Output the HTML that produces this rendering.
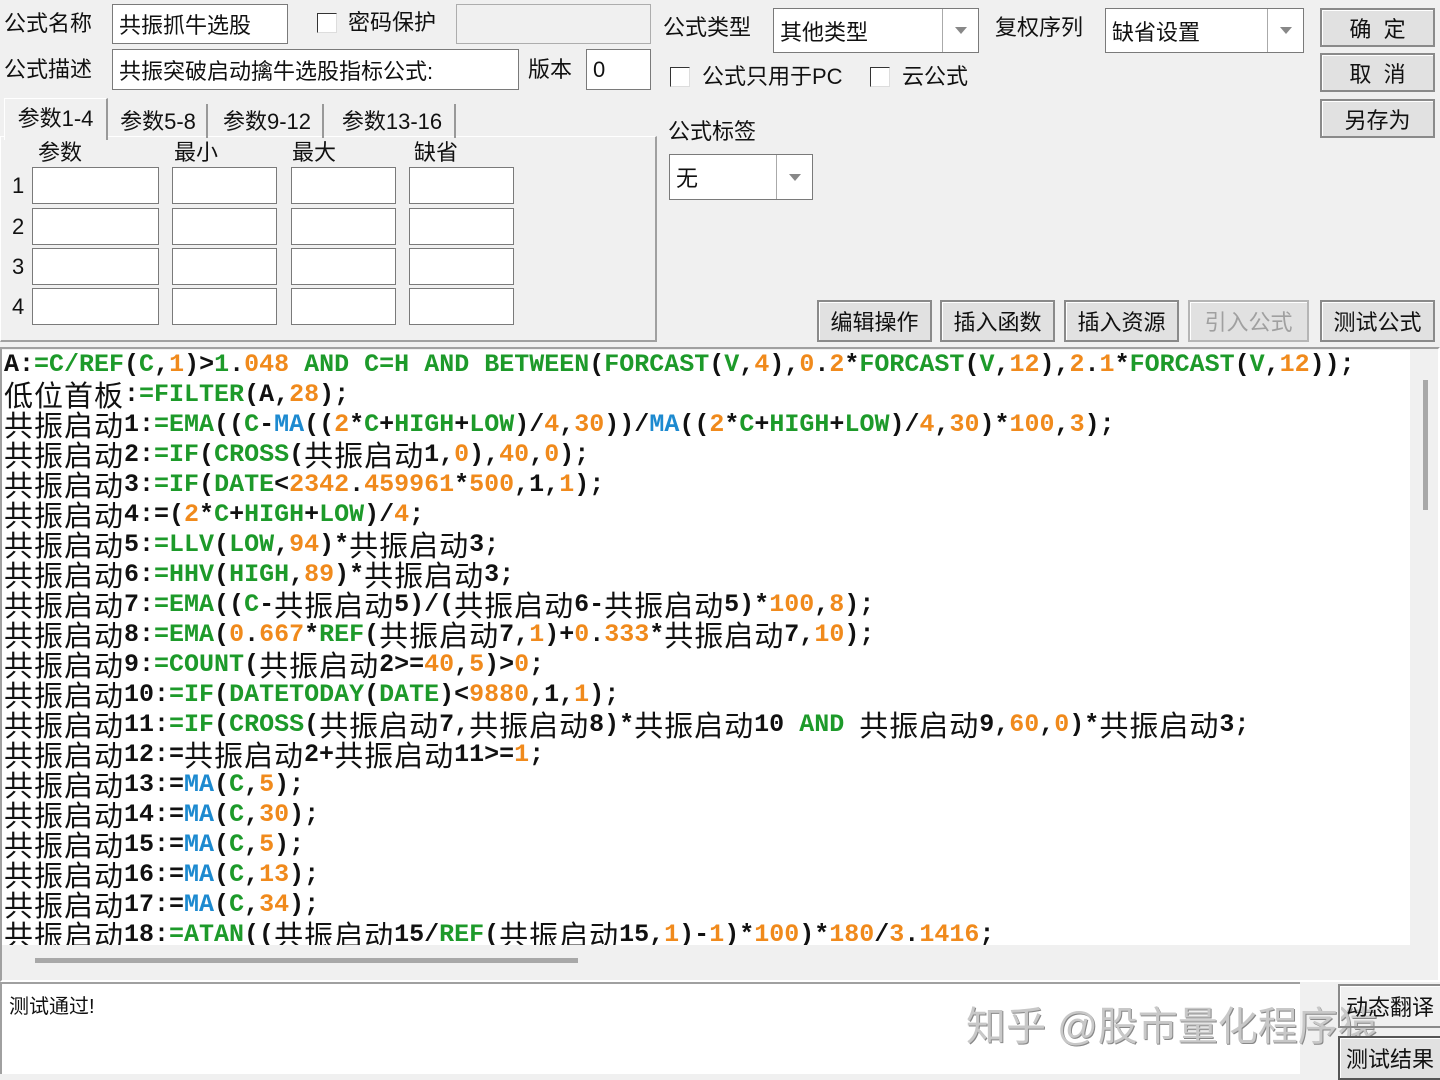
<!DOCTYPE html>
<html><head><meta charset="utf-8"><style>
*{box-sizing:border-box;margin:0;padding:0}
body{width:1440px;height:1074px;background:#f0f0f0;position:relative;overflow:hidden;font-family:"Liberation Sans","Noto Sans CJK SC",sans-serif;font-size:22px;color:#111}
.a{position:absolute}
.lbl{position:absolute;line-height:30px;white-space:nowrap}
.in{position:absolute;background:#fff;border:1px solid #7a7a7a;padding-left:6px;white-space:nowrap;display:flex;align-items:center}
.dis{background:#f0f0f0;border-color:#adadad}
.cb{position:absolute;width:20px;height:20px;background:#fff;border:1px solid #333;border-right-color:#ddd;border-bottom-color:#ddd}
.btn{position:absolute;background:#e1e1e1;border:2px solid #8a8a8a;display:flex;align-items:center;justify-content:center;white-space:nowrap;box-shadow:inset 1px 1px 0 #fff}
.sel .arr{position:absolute;right:0;top:0;bottom:0;width:36px;border-left:1px solid #aaa;display:flex;align-items:center;justify-content:center}
.tri{width:0;height:0;border-left:6px solid transparent;border-right:6px solid transparent;border-top:7px solid #888}
.box{position:absolute;background:#fff;border:1px solid #7a7a7a}
#code{position:absolute;left:2px;top:350px;width:1408px;height:595px;background:#fff;overflow:hidden}
#code div{height:30px;line-height:30px;white-space:pre;font-family:"Liberation Mono",monospace;font-size:25px;font-weight:bold;color:#111;padding-left:2px}
.c{font-family:"Noto Sans CJK SC",sans-serif;font-weight:normal;font-size:29px;letter-spacing:1px;display:inline-block;height:30px;line-height:28px;vertical-align:top;overflow:visible}
.g{color:#1d9a2a}.o{color:#f08a1c}.b{color:#1d8ad0}
</style></head><body>
<div class="lbl" style="left:4px;top:9px">公式名称</div>
<div class="in" style="left:112px;top:4px;width:176px;height:40px">共振抓牛选股</div>
<div class="cb" style="left:317px;top:13px"></div>
<div class="lbl" style="left:348px;top:8px">密码保护</div>
<div class="in dis" style="left:456px;top:4px;width:195px;height:40px"></div>
<div class="lbl" style="left:4px;top:55px">公式描述</div>
<div class="in" style="left:112px;top:49px;width:407px;height:41px">共振突破启动擒牛选股指标公式:</div>
<div class="lbl" style="left:528px;top:55px">版本</div>
<div class="in" style="left:586px;top:49px;width:65px;height:41px">0</div>

<div class="lbl" style="left:663px;top:13px">公式类型</div>
<div class="in sel" style="left:773px;top:8px;width:206px;height:45px">其他类型<div class="arr"><div class="tri"></div></div></div>
<div class="lbl" style="left:995px;top:13px">复权序列</div>
<div class="in sel" style="left:1105px;top:8px;width:199px;height:45px">缺省设置<div class="arr"><div class="tri"></div></div></div>
<div class="cb" style="left:670px;top:67px"></div>
<div class="lbl" style="left:702px;top:62px">公式只用于PC</div>
<div class="cb" style="left:870px;top:67px"></div>
<div class="lbl" style="left:902px;top:62px">云公式</div>
<div class="lbl" style="left:668px;top:117px">公式标签</div>
<div class="in sel" style="left:669px;top:154px;width:144px;height:46px">无<div class="arr"><div class="tri"></div></div></div>

<div class="btn" style="left:1320px;top:8px;width:115px;height:39px">确&nbsp;&nbsp;定</div>
<div class="btn" style="left:1320px;top:53px;width:115px;height:39px">取&nbsp;&nbsp;消</div>
<div class="btn" style="left:1320px;top:99px;width:115px;height:39px">另存为</div>

<div class="a" style="left:0;top:136px;width:657px;height:206px;border:1px solid #fff;border-right:2px solid #a0a0a0;border-bottom:2px solid #a0a0a0"></div>
<div class="a" style="left:4px;top:98px;width:104px;height:42px;background:#f0f0f0;border:1px solid #fff;border-bottom:none;border-right:2px solid #999;text-align:center;line-height:40px">参数1-4</div>
<div class="a" style="left:110px;top:104px;width:98px;height:34px;border-right:2px solid #999;text-align:center;line-height:36px">参数5-8</div>
<div class="a" style="left:212px;top:104px;width:112px;height:34px;border-right:2px solid #999;text-align:center;line-height:36px">参数9-12</div>
<div class="a" style="left:330px;top:104px;width:126px;height:34px;border-right:2px solid #999;text-align:center;line-height:36px">参数13-16</div>
<div class="lbl" style="left:38px;top:138px">参数</div>
<div class="lbl" style="left:174px;top:138px">最小</div>
<div class="lbl" style="left:292px;top:138px">最大</div>
<div class="lbl" style="left:414px;top:138px">缺省</div>
<div class="lbl" style="left:12px;top:171px">1</div><div class="lbl" style="left:12px;top:212px">2</div><div class="lbl" style="left:12px;top:252px">3</div><div class="lbl" style="left:12px;top:292px">4</div>
<div class="box" style="left:32px;top:167px;width:127px;height:37px"></div><div class="box" style="left:172px;top:167px;width:105px;height:37px"></div><div class="box" style="left:291px;top:167px;width:105px;height:37px"></div><div class="box" style="left:409px;top:167px;width:105px;height:37px"></div>
<div class="box" style="left:32px;top:208px;width:127px;height:37px"></div><div class="box" style="left:172px;top:208px;width:105px;height:37px"></div><div class="box" style="left:291px;top:208px;width:105px;height:37px"></div><div class="box" style="left:409px;top:208px;width:105px;height:37px"></div>
<div class="box" style="left:32px;top:248px;width:127px;height:37px"></div><div class="box" style="left:172px;top:248px;width:105px;height:37px"></div><div class="box" style="left:291px;top:248px;width:105px;height:37px"></div><div class="box" style="left:409px;top:248px;width:105px;height:37px"></div>
<div class="box" style="left:32px;top:288px;width:127px;height:37px"></div><div class="box" style="left:172px;top:288px;width:105px;height:37px"></div><div class="box" style="left:291px;top:288px;width:105px;height:37px"></div><div class="box" style="left:409px;top:288px;width:105px;height:37px"></div>

<div class="btn" style="left:817px;top:300px;width:115px;height:42px">编辑操作</div>
<div class="btn" style="left:940px;top:300px;width:115px;height:42px">插入函数</div>
<div class="btn" style="left:1064px;top:300px;width:115px;height:42px">插入资源</div>
<div class="btn" style="left:1188px;top:300px;width:121px;height:42px;color:#a0a0a0;border-color:#b5b5b5">引入公式</div>
<div class="btn" style="left:1320px;top:300px;width:115px;height:42px">测试公式</div>

<div class="a" style="left:0;top:347px;width:1440px;height:635px;border:2px solid #a0a0a0;border-right-color:#fff;border-bottom-color:#fff;background:#f0f0f0"></div>
<div id="code">
<div>A:<span class="g">=C/REF</span>(<span class="g">C</span>,<span class="o">1</span>)&gt;<span class="g">1</span>.<span class="o">048</span> <span class="g">AND C=H AND BETWEEN</span>(<span class="g">FORCAST</span>(<span class="g">V</span>,<span class="o">4</span>),<span class="o">0</span>.<span class="o">2</span>*<span class="g">FORCAST</span>(<span class="g">V</span>,<span class="o">12</span>),<span class="o">2</span>.<span class="o">1</span>*<span class="g">FORCAST</span>(<span class="g">V</span>,<span class="o">12</span>));</div>
<div><span class="c">低位首板</span>:<span class="g">=FILTER</span>(A,<span class="o">28</span>);</div>
<div><span class="c">共振启动</span>1:<span class="g">=EMA</span>((<span class="g">C</span>-<span class="b">MA</span>((<span class="o">2</span>*<span class="g">C</span>+<span class="g">HIGH</span>+<span class="g">LOW</span>)/<span class="o">4</span>,<span class="o">30</span>))/<span class="b">MA</span>((<span class="o">2</span>*<span class="g">C</span>+<span class="g">HIGH</span>+<span class="g">LOW</span>)/<span class="o">4</span>,<span class="o">30</span>)*<span class="o">100</span>,<span class="o">3</span>);</div>
<div><span class="c">共振启动</span>2:<span class="g">=IF</span>(<span class="g">CROSS</span>(<span class="c">共振启动</span>1,<span class="o">0</span>),<span class="o">40</span>,<span class="o">0</span>);</div>
<div><span class="c">共振启动</span>3:<span class="g">=IF</span>(<span class="g">DATE</span>&lt;<span class="o">2342</span>.<span class="o">459961</span>*<span class="o">500</span>,1,<span class="o">1</span>);</div>
<div><span class="c">共振启动</span>4:=(<span class="o">2</span>*<span class="g">C</span>+<span class="g">HIGH</span>+<span class="g">LOW</span>)/<span class="o">4</span>;</div>
<div><span class="c">共振启动</span>5:<span class="g">=LLV</span>(<span class="g">LOW</span>,<span class="o">94</span>)*<span class="c">共振启动</span>3;</div>
<div><span class="c">共振启动</span>6:<span class="g">=HHV</span>(<span class="g">HIGH</span>,<span class="o">89</span>)*<span class="c">共振启动</span>3;</div>
<div><span class="c">共振启动</span>7:<span class="g">=EMA</span>((<span class="g">C</span>-<span class="c">共振启动</span>5)/(<span class="c">共振启动</span>6-<span class="c">共振启动</span>5)*<span class="o">100</span>,<span class="o">8</span>);</div>
<div><span class="c">共振启动</span>8:<span class="g">=EMA</span>(<span class="o">0</span>.<span class="o">667</span>*<span class="g">REF</span>(<span class="c">共振启动</span>7,<span class="o">1</span>)+<span class="o">0</span>.<span class="o">333</span>*<span class="c">共振启动</span>7,<span class="o">10</span>);</div>
<div><span class="c">共振启动</span>9:<span class="g">=COUNT</span>(<span class="c">共振启动</span>2&gt;=<span class="o">40</span>,<span class="o">5</span>)&gt;<span class="o">0</span>;</div>
<div><span class="c">共振启动</span>10:<span class="g">=IF</span>(<span class="g">DATETODAY</span>(<span class="g">DATE</span>)&lt;<span class="o">9880</span>,1,<span class="o">1</span>);</div>
<div><span class="c">共振启动</span>11:<span class="g">=IF</span>(<span class="g">CROSS</span>(<span class="c">共振启动</span>7,<span class="c">共振启动</span>8)*<span class="c">共振启动</span>10 <span class="g">AND</span> <span class="c">共振启动</span>9,<span class="o">60</span>,<span class="o">0</span>)*<span class="c">共振启动</span>3;</div>
<div><span class="c">共振启动</span>12:=<span class="c">共振启动</span>2+<span class="c">共振启动</span>11&gt;=<span class="o">1</span>;</div>
<div><span class="c">共振启动</span>13:=<span class="b">MA</span>(<span class="g">C</span>,<span class="o">5</span>);</div>
<div><span class="c">共振启动</span>14:=<span class="b">MA</span>(<span class="g">C</span>,<span class="o">30</span>);</div>
<div><span class="c">共振启动</span>15:=<span class="b">MA</span>(<span class="g">C</span>,<span class="o">5</span>);</div>
<div><span class="c">共振启动</span>16:=<span class="b">MA</span>(<span class="g">C</span>,<span class="o">13</span>);</div>
<div><span class="c">共振启动</span>17:=<span class="b">MA</span>(<span class="g">C</span>,<span class="o">34</span>);</div>
<div><span class="c">共振启动</span>18:<span class="g">=ATAN</span>((<span class="c">共振启动</span>15/<span class="g">REF</span>(<span class="c">共振启动</span>15,<span class="o">1</span>)-<span class="o">1</span>)*<span class="o">100</span>)*<span class="o">180</span>/<span class="o">3</span>.<span class="o">1416</span>;</div>
</div>
<div class="a" style="left:1423px;top:380px;width:5px;height:130px;background:#a8a8a8"></div>
<div class="a" style="left:35px;top:958px;width:543px;height:5px;background:#a8a8a8"></div>

<div class="a" style="left:0;top:982px;width:1300px;height:92px;background:#fff;border:2px solid #a0a0a0;border-right:none;border-bottom:none"></div>
<div class="a" style="left:9px;top:990px;font-size:20px">测试通过!</div>
<div class="a" style="left:966px;top:994px;font-size:40px;color:#c8c8c8;text-shadow:1px 1px 0 #888;white-space:nowrap">知乎 @股市量化程序猿</div>
<div class="btn" style="left:1338px;top:984px;width:104px;height:44px;background:transparent">动态翻译</div>
<div class="btn" style="left:1338px;top:1036px;width:104px;height:44px;border-color:#555">测试结果</div>
</body></html>
